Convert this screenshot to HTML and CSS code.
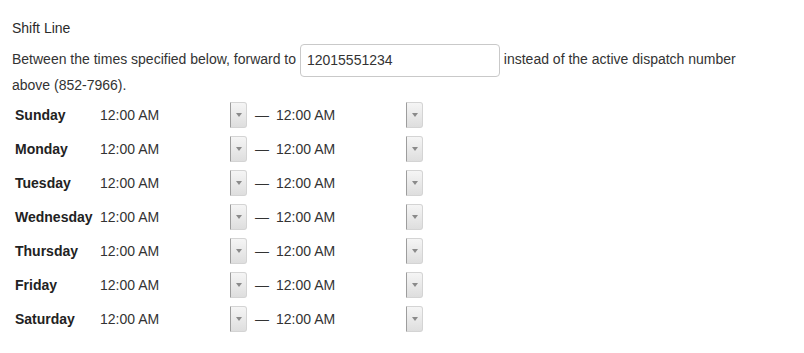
FILE: index.html
```
<!DOCTYPE html>
<html>
<head>
<meta charset="utf-8">
<link rel="stylesheet" href="styles.css">
</head>
<body>
<div class="panel">
  <div class="title">Shift Line</div>
  <p class="desc">Between the times specified below, forward to <input class="phone" type="text" value="12015551234"> instead of the active dispatch number above (852-7966).</p>
  <div class="schedule">
    <div class="row"><span class="day">Sunday</span><div class="sel"><span class="val">12:00 AM</span><span class="btn"><i class="tri"></i></span></div><span class="dash">—</span><div class="sel"><span class="val">12:00 AM</span><span class="btn"><i class="tri"></i></span></div></div>
    <div class="row"><span class="day">Monday</span><div class="sel"><span class="val">12:00 AM</span><span class="btn"><i class="tri"></i></span></div><span class="dash">—</span><div class="sel"><span class="val">12:00 AM</span><span class="btn"><i class="tri"></i></span></div></div>
    <div class="row"><span class="day">Tuesday</span><div class="sel"><span class="val">12:00 AM</span><span class="btn"><i class="tri"></i></span></div><span class="dash">—</span><div class="sel"><span class="val">12:00 AM</span><span class="btn"><i class="tri"></i></span></div></div>
    <div class="row"><span class="day">Wednesday</span><div class="sel"><span class="val">12:00 AM</span><span class="btn"><i class="tri"></i></span></div><span class="dash">—</span><div class="sel"><span class="val">12:00 AM</span><span class="btn"><i class="tri"></i></span></div></div>
    <div class="row"><span class="day">Thursday</span><div class="sel"><span class="val">12:00 AM</span><span class="btn"><i class="tri"></i></span></div><span class="dash">—</span><div class="sel"><span class="val">12:00 AM</span><span class="btn"><i class="tri"></i></span></div></div>
    <div class="row"><span class="day">Friday</span><div class="sel"><span class="val">12:00 AM</span><span class="btn"><i class="tri"></i></span></div><span class="dash">—</span><div class="sel"><span class="val">12:00 AM</span><span class="btn"><i class="tri"></i></span></div></div>
    <div class="row"><span class="day">Saturday</span><div class="sel"><span class="val">12:00 AM</span><span class="btn"><i class="tri"></i></span></div><span class="dash">—</span><div class="sel"><span class="val">12:00 AM</span><span class="btn"><i class="tri"></i></span></div></div>
  </div>
</div>
</body>
</html>
```
FILE: styles.css
```
html, body {
  margin: 0;
  padding: 0;
  background: #fff;
}
body {
  font-family: "Liberation Sans", Arial, sans-serif;
  font-size: 14px;
  color: #333;
}
.panel {
  padding: 18px 12px 0 12px;
  width: 750px;
}
.title {
  line-height: 20px;
  color: #2b2b2b;
}
.desc {
  margin: 8px 0 0 0;
  line-height: 26px;
}
.phone {
  box-sizing: border-box;
  width: 200px;
  height: 33px;
  margin: -5px 0;
  padding: 0 6px;
  border: 1px solid #c9c9c9;
  border-radius: 4px;
  font-family: inherit;
  font-size: 14px;
  color: #333;
  vertical-align: middle;
  background: #fff;
}
.schedule {
  display: flex;
  flex-direction: column;
}
.row {
  display: flex;
  align-items: center;
  height: 34px;
  padding-left: 3px;
}
.day {
  width: 83px;
  font-weight: bold;
  color: #222;
}
.sel {
  display: flex;
  align-items: center;
  justify-content: space-between;
  width: 149px;
  padding-left: 2px;
  box-sizing: border-box;
}
.val {
  color: #333;
}
.btn {
  box-sizing: border-box;
  width: 17px;
  height: 26px;
  border: 1px solid #d4d4d4;
  border-left: 1px solid #9d9d9d;
  border-radius: 0 3px 3px 0;
  background: linear-gradient(#f5f5f5, #dedede);
  display: flex;
  align-items: center;
  justify-content: center;
}
.tri {
  display: block;
  width: 0;
  height: 0;
  border-left: 3px solid transparent;
  border-right: 3px solid transparent;
  border-top: 4px solid #8a8a8a;
}
.dash {
  box-sizing: border-box;
  width: 27px;
  padding-left: 8px;
  color: #333;
}
```
